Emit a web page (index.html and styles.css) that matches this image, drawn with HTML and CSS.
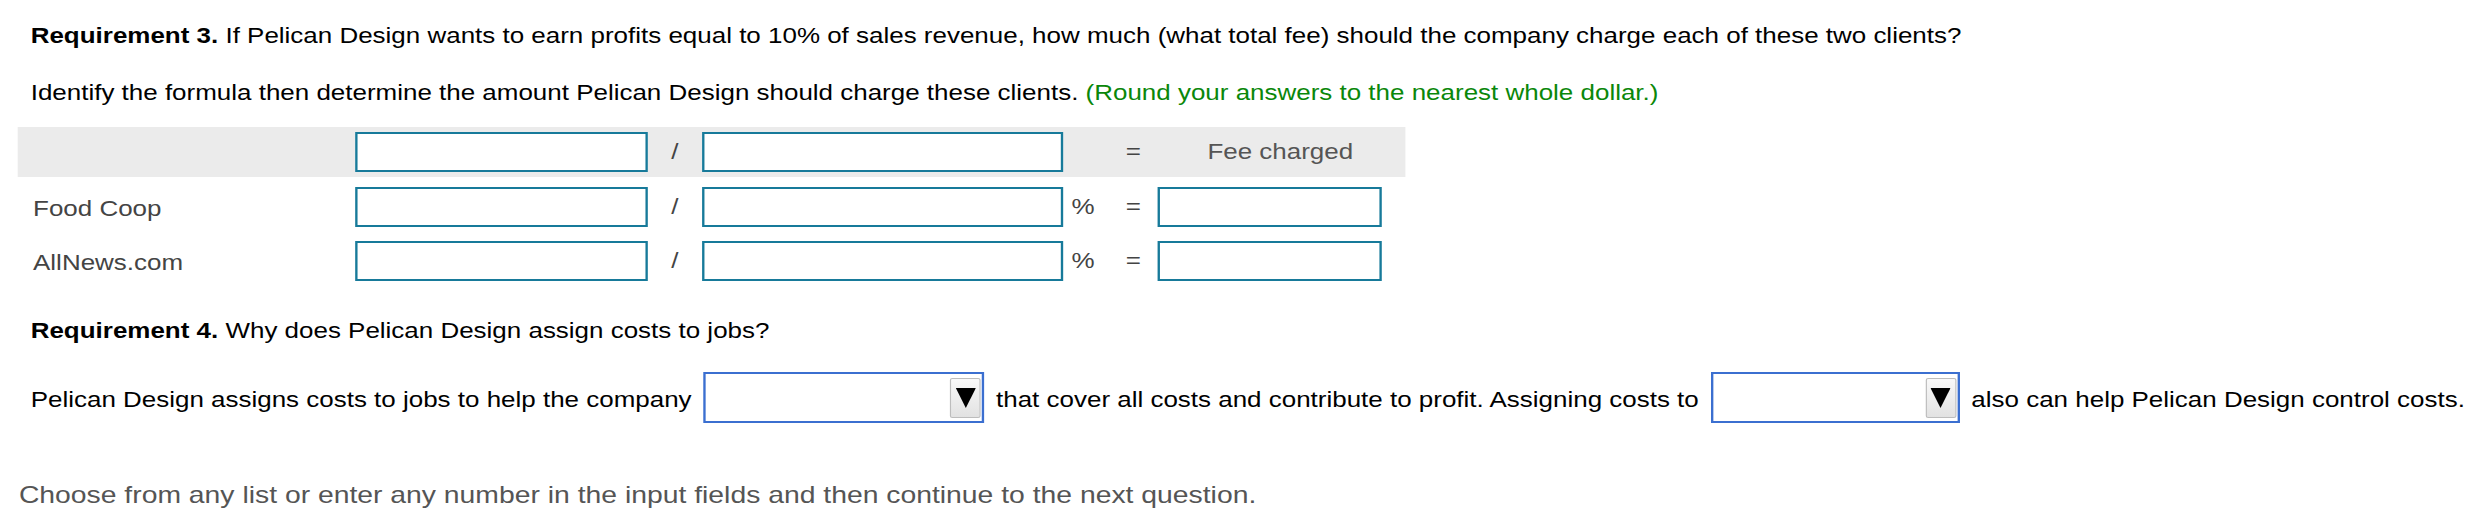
FILE: index.html
```html
<!DOCTYPE html>
<html lang="en">
<head>
<meta charset="utf-8">
<title>Requirement 3 and 4</title>
<link rel="stylesheet" href="styles.css">
</head>
<body>
<div class="page">
  <p class="line q1"><b>Requirement 3.</b> If Pelican Design wants to earn profits equal to 10% of sales revenue, how much (what total fee) should the company charge each of these two clients?</p>
  <p class="line q2">Identify the formula then determine the amount Pelican Design should charge these clients. <span class="hint">(Round your answers to the nearest whole dollar.)</span></p>

  <div class="table">
    <div class="row head">
      <div class="label"></div>
      <input class="box" type="text" aria-label="Formula term 1">
      <div class="op">/</div>
      <input class="box" type="text" aria-label="Formula term 2">
      <div class="pct"></div>
      <div class="op">=</div>
      <div class="fee">Fee charged</div>
    </div>
    <div class="row body first">
      <div class="label">Food Coop</div>
      <input class="box" type="text" aria-label="Food Coop term 1">
      <div class="op">/</div>
      <input class="box" type="text" aria-label="Food Coop term 2">
      <div class="pct">%</div>
      <div class="op">=</div>
      <div class="last"><input class="box" type="text" aria-label="Food Coop fee"></div>
    </div>
    <div class="row body">
      <div class="label">AllNews.com</div>
      <input class="box" type="text" aria-label="AllNews term 1">
      <div class="op">/</div>
      <input class="box" type="text" aria-label="AllNews term 2">
      <div class="pct">%</div>
      <div class="op">=</div>
      <div class="last"><input class="box" type="text" aria-label="AllNews fee"></div>
    </div>
  </div>

  <p class="line q4"><b>Requirement 4.</b> Why does Pelican Design assign costs to jobs?</p>

  <div class="sentence">
    <span class="txt">Pelican Design assigns costs to jobs to help the company</span>
    <div class="dd dd1"><span class="btn"><svg width="17" height="21" viewBox="0 0 17 21"><polygon points="0,1 17,1 8.5,21" fill="#000"/></svg></span></div>
    <span class="txt">that cover all costs and contribute to profit. Assigning costs to</span>
    <div class="dd dd2"><span class="btn"><svg width="17" height="21" viewBox="0 0 17 21"><polygon points="0,1 17,1 8.5,21" fill="#000"/></svg></span></div>
    <span class="txt">also can help Pelican Design control costs.</span>
  </div>

  <p class="footer">Choose from any list or enter any number in the input fields and then continue to the next question.</p>
</div>
</body>
</html>
```
FILE: styles.css
```css
html, body {
  margin: 0;
  padding: 0;
  background: #fff;
}
body {
  font-family: "Liberation Sans", Arial, Helvetica, sans-serif;
  color: #000;
}
.page {
  width: 2110px;
  transform: scaleX(1.18);
  transform-origin: 0 0;
}
.line {
  margin: 0;
  padding-left: 26px;
  font-size: 22px;
  line-height: 26px;
  white-space: nowrap;
}
.q1 { padding-top: 23px; }
.q2 { margin-top: 31px; }
.hint { color: #0a870a; }

.table {
  margin: 21px 0 0 15px;
  width: 1176px;
}
.row {
  display: grid;
  grid-template-columns: 286px 248px 46px 306px 39px 41px 210px;
  align-items: center;
  font-size: 22px;
  color: #444;
}
.head {
  height: 50px;
  background: #ebebeb;
}
.body { height: 54px; }
.first { margin-top: 3px; }
.label {
  padding-left: 13px;
  padding-top: 3px;
  color: #444;
}
.box {
  box-sizing: border-box;
  display: block;
  width: 100%;
  height: 40px;
  margin: 0;
  padding: 0;
  border: 2px solid #177a9a;
  border-radius: 0;
  background: #fff;
  outline: none;
}
.last .box { width: 190px; }
.op { text-align: center; }
.pct { padding-left: 7px; }
.fee {
  text-align: center;
  color: #555;
  padding-right: 2px;
}

.q4 { margin-top: 30px; }

.sentence {
  display: flex;
  align-items: center;
  column-gap: 10px;
  margin-top: 28px;
  padding-left: 26px;
  font-size: 22px;
  line-height: 26px;
  white-space: nowrap;
}
.txt { padding-top: 4px; }
.dd {
  box-sizing: border-box;
  height: 51px;
  border: 2px solid #3b6fd0;
  background: #fff;
  display: flex;
  justify-content: flex-end;
  align-items: center;
  padding-right: 1px;
}
.dd1 { width: 238px; }
.dd2 { width: 211px; }
.btn {
  box-sizing: border-box;
  width: 26px;
  height: 40px;
  border: 1px solid #bdbdbd;
  border-radius: 2px;
  background: linear-gradient(#f9f9f9, #e2e2e2);
  display: flex;
  align-items: center;
  justify-content: center;
}
.btn svg { display: block; }

.footer {
  margin: 58px 0 0 16px;
  font-size: 24px;
  line-height: 28px;
  color: #555;
  white-space: nowrap;
}
```
